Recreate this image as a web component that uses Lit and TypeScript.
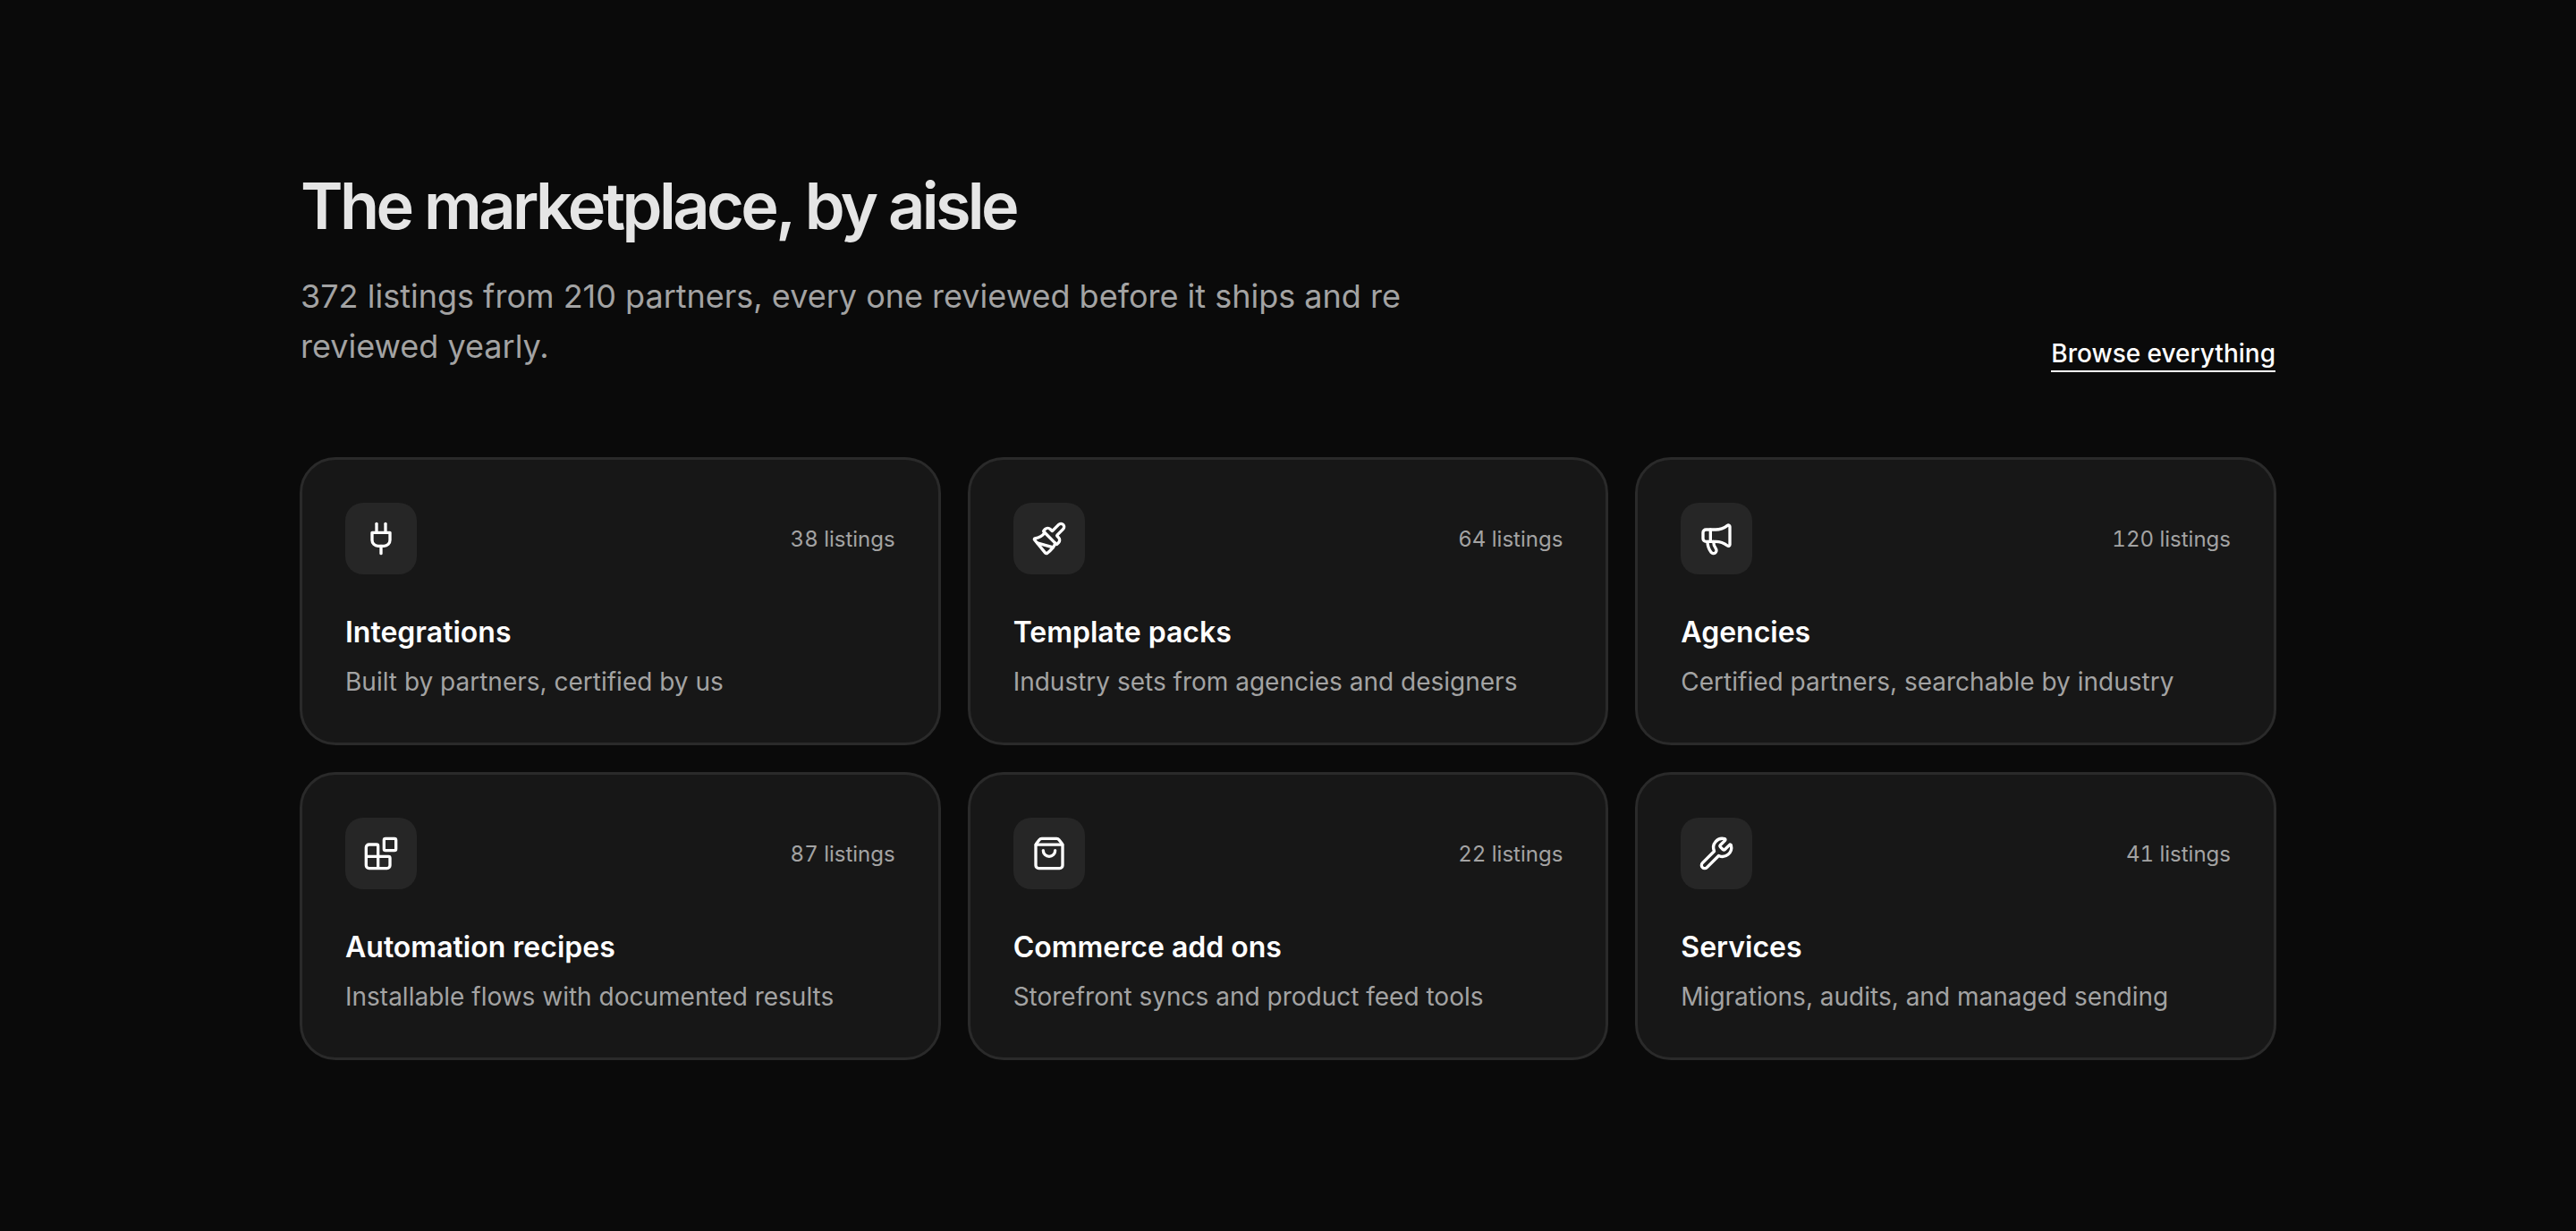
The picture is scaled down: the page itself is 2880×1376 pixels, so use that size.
import { LitElement, html, css, svg } from 'lit';
import { customElement } from 'lit/decorators.js';

const ICONS = {
  plug: svg`<path d="M12 22v-5"/><path d="M9 8V2"/><path d="M15 8V2"/><path d="M18 8v5a4 4 0 0 1-4 4h-4a4 4 0 0 1-4-4V8Z"/>`,
  brush: svg`<path d="m14.622 17.897-10.68-2.913"/><path d="M18.376 2.622a1 1 0 1 1 3.002 3.002L17.36 9.643a.5.5 0 0 0 0 .707l.944.944a2.41 2.41 0 0 1 0 3.408l-.944.944a.5.5 0 0 1-.707 0L8.354 7.348a.5.5 0 0 1 0-.707l.944-.944a2.41 2.41 0 0 1 3.408 0l.944.944a.5.5 0 0 0 .707 0z"/><path d="M9 8c-1.804 2.71-3.97 3.46-6.583 3.948a.507.507 0 0 0-.302.819l7.32 8.883a1 1 0 0 0 1.185.204C12.735 20.405 16 16.792 16 15"/>`,
  megaphone: svg`<path d="M11 6a13 13 0 0 0 8.4-2.8A1 1 0 0 1 21 4v12a1 1 0 0 1-1.6.8A13 13 0 0 0 11 14H5a2 2 0 0 1-2-2V8a2 2 0 0 1 2-2z"/><path d="M6 14a12 12 0 0 0 2.4 7.2 2 2 0 0 0 3.2-2.4A8 8 0 0 1 10 14"/><path d="M8 6v8"/>`,
  blocks: svg`<path d="M10 22V7a1 1 0 0 0-1-1H4a2 2 0 0 0-2 2v12a2 2 0 0 0 2 2h12a2 2 0 0 0 2-2v-5a1 1 0 0 0-1-1H2"/><rect x="14" y="2" width="8" height="8" rx="1"/>`,
  bag: svg`<path d="M16 10a4 4 0 0 1-8 0"/><path d="M3.103 6.034h17.794"/><path d="M3.4 5.467a2 2 0 0 0-.4 1.2V20a2 2 0 0 0 2 2h14a2 2 0 0 0 2-2V6.667a2 2 0 0 0-.4-1.2l-2-2.667A2 2 0 0 0 17 2H7a2 2 0 0 0-1.6.8z"/>`,
  wrench: svg`<path d="M14.7 6.3a1 1 0 0 0 0 1.4l1.6 1.6a1 1 0 0 0 1.4 0l3.106-3.105c.32-.322.863-.22.983.218a6 6 0 0 1-8.259 7.057l-7.91 7.91a1 1 0 0 1-2.999-3l7.91-7.91a6 6 0 0 1 7.057-8.259c.438.12.54.662.219.984z"/>`,
};

const AISLES = [
  { icon: ICONS.plug, count: '38 listings', title: 'Integrations', desc: 'Built by partners, certified by us' },
  { icon: ICONS.brush, count: '64 listings', title: 'Template packs', desc: 'Industry sets from agencies and designers' },
  { icon: ICONS.megaphone, count: '120 listings', title: 'Agencies', desc: 'Certified partners, searchable by industry' },
  { icon: ICONS.blocks, count: '87 listings', title: 'Automation recipes', desc: 'Installable flows with documented results' },
  { icon: ICONS.bag, count: '22 listings', title: 'Commerce add ons', desc: 'Storefront syncs and product feed tools' },
  { icon: ICONS.wrench, count: '41 listings', title: 'Services', desc: 'Migrations, audits, and managed sending' },
];

@customElement('app-root')
export class AppRoot extends LitElement {
  static styles = css`
    :host {
      display: block;
      min-height: 1376px;
      background: #0a0a0a;
      font-family: Inter, sans-serif;
    }
    .page {
      width: 2210px;
      margin: 0 auto;
      padding-top: 190px;
    }
    .head {
      display: flex;
      justify-content: space-between;
      align-items: flex-end;
      margin-bottom: 96px;
      padding: 0 1px;
    }
    h1 {
      margin: 0 0 34px;
      font-size: 72px;
      line-height: 1.1;
      font-weight: 600;
      letter-spacing: -0.05em;
      color: #e5e5e5;
    }
    .sub {
      margin: 0;
      max-width: 1280px;
      font-size: 36px;
      line-height: 56px;
      color: #a3a3a3;
    }
    .all {
      margin-bottom: -1px;
      padding-bottom: 1px;
      border-bottom: 2px solid #fff;
      font-size: 28px;
      line-height: 36px;
      font-weight: 500;
      color: #fff;
    }
    .grid {
      display: grid;
      grid-template-columns: repeat(3, 1fr);
      gap: 30px;
    }
    .card {
      padding: 48px;
      border: 3px solid #2a2a2a;
      border-radius: 40px;
      background: #171717;
    }
    .top {
      display: flex;
      justify-content: space-between;
      align-items: center;
      margin-bottom: 43px;
    }
    .box {
      display: flex;
      align-items: center;
      justify-content: center;
      width: 80px;
      height: 80px;
      border-radius: 20px;
      background: #262626;
    }
    .box svg {
      width: 40px;
      height: 40px;
      fill: none;
      stroke: #fff;
      stroke-width: 2;
      stroke-linecap: round;
      stroke-linejoin: round;
    }
    .count {
      font-size: 24px;
      font-variant-numeric: tabular-nums;
      color: #a3a3a3;
    }
    h3 {
      margin: 0 0 13px;
      font-size: 32px;
      line-height: 44px;
      font-weight: 600;
      color: #fff;
    }
    .desc {
      margin: 0;
      font-size: 28px;
      line-height: 40px;
      color: #a3a3a3;
    }
  `;

  render() {
    return html`
      <div class="page">
        <div class="head">
          <div>
            <h1>The marketplace, by aisle</h1>
            <p class="sub">372 listings from 210 partners, every one reviewed before it ships and re reviewed yearly.</p>
          </div>
          <a class="all">Browse everything</a>
        </div>
        <div class="grid">
          ${AISLES.map(
            (a) => html`
              <div class="card">
                <div class="top">
                  <span class="box"><svg viewBox="0 0 24 24">${a.icon}</svg></span>
                  <span class="count">${a.count}</span>
                </div>
                <h3>${a.title}</h3>
                <p class="desc">${a.desc}</p>
              </div>
            `
          )}
        </div>
      </div>
    `;
  }
}
